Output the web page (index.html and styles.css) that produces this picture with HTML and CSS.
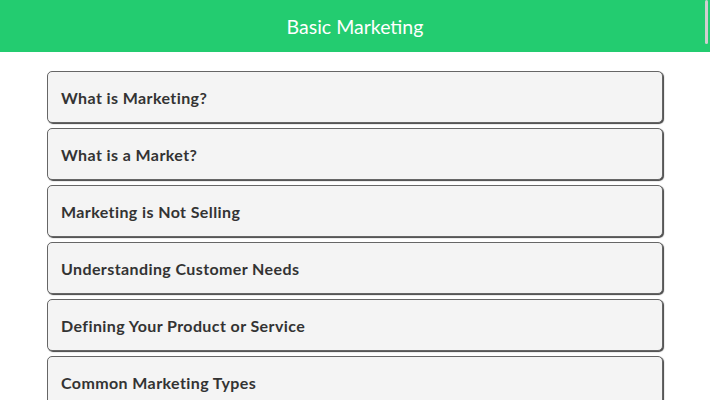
FILE: index.html
```html
<!DOCTYPE html>
<html lang="en">
<head>
    <meta charset="UTF-8">
    <meta name="viewport" content="width=device-width, initial-scale=1.0">
    <title>Basic Marketing</title>
    <link rel="stylesheet" href="styles.css">
</head>
<body>
    <header class="topbar">
        <h1>Basic Marketing</h1>
        <div class="scroll-thumb"></div>
    </header>
    <main class="topics">
        <div class="topic">What is Marketing?</div>
        <div class="topic">What is a Market?</div>
        <div class="topic">Marketing is Not Selling</div>
        <div class="topic">Understanding Customer Needs</div>
        <div class="topic">Defining Your Product or Service</div>
        <div class="topic">Common Marketing Types</div>
    </main>
</body>
</html>
```

FILE: styles.css
```css
body {
    margin: 0;
    font-family: Lato, "Noto Sans", sans-serif;
    background-color: #fff;
    overflow: hidden;
}
.topbar {
    position: relative;
    height: 52px;
    background-color: #23cc70;
    display: flex;
    align-items: center;
    justify-content: center;
}
.topbar h1 {
    margin: 0;
    font-size: 19.5px;
    font-weight: normal;
    color: #fff;
}
.scroll-thumb {
    position: absolute;
    right: 2px;
    top: 0;
    width: 3px;
    height: 44px;
    border-radius: 2px;
    background-color: #cfcfcf;
}
.topics {
    width: 616px;
    margin: 19px auto 0;
    display: flex;
    flex-direction: column;
    gap: 5px;
}
.topic {
    height: 52px;
    flex-shrink: 0;
    box-sizing: border-box;
    border: 1px solid #666;
    border-radius: 5px;
    box-shadow: 1px 1px 1px #444;
    background-color: #f4f4f4;
    padding: 0 13px;
    display: flex;
    align-items: center;
    font-size: 16px;
    letter-spacing: 0.4px;
    font-weight: bold;
    color: #333;
}
```
